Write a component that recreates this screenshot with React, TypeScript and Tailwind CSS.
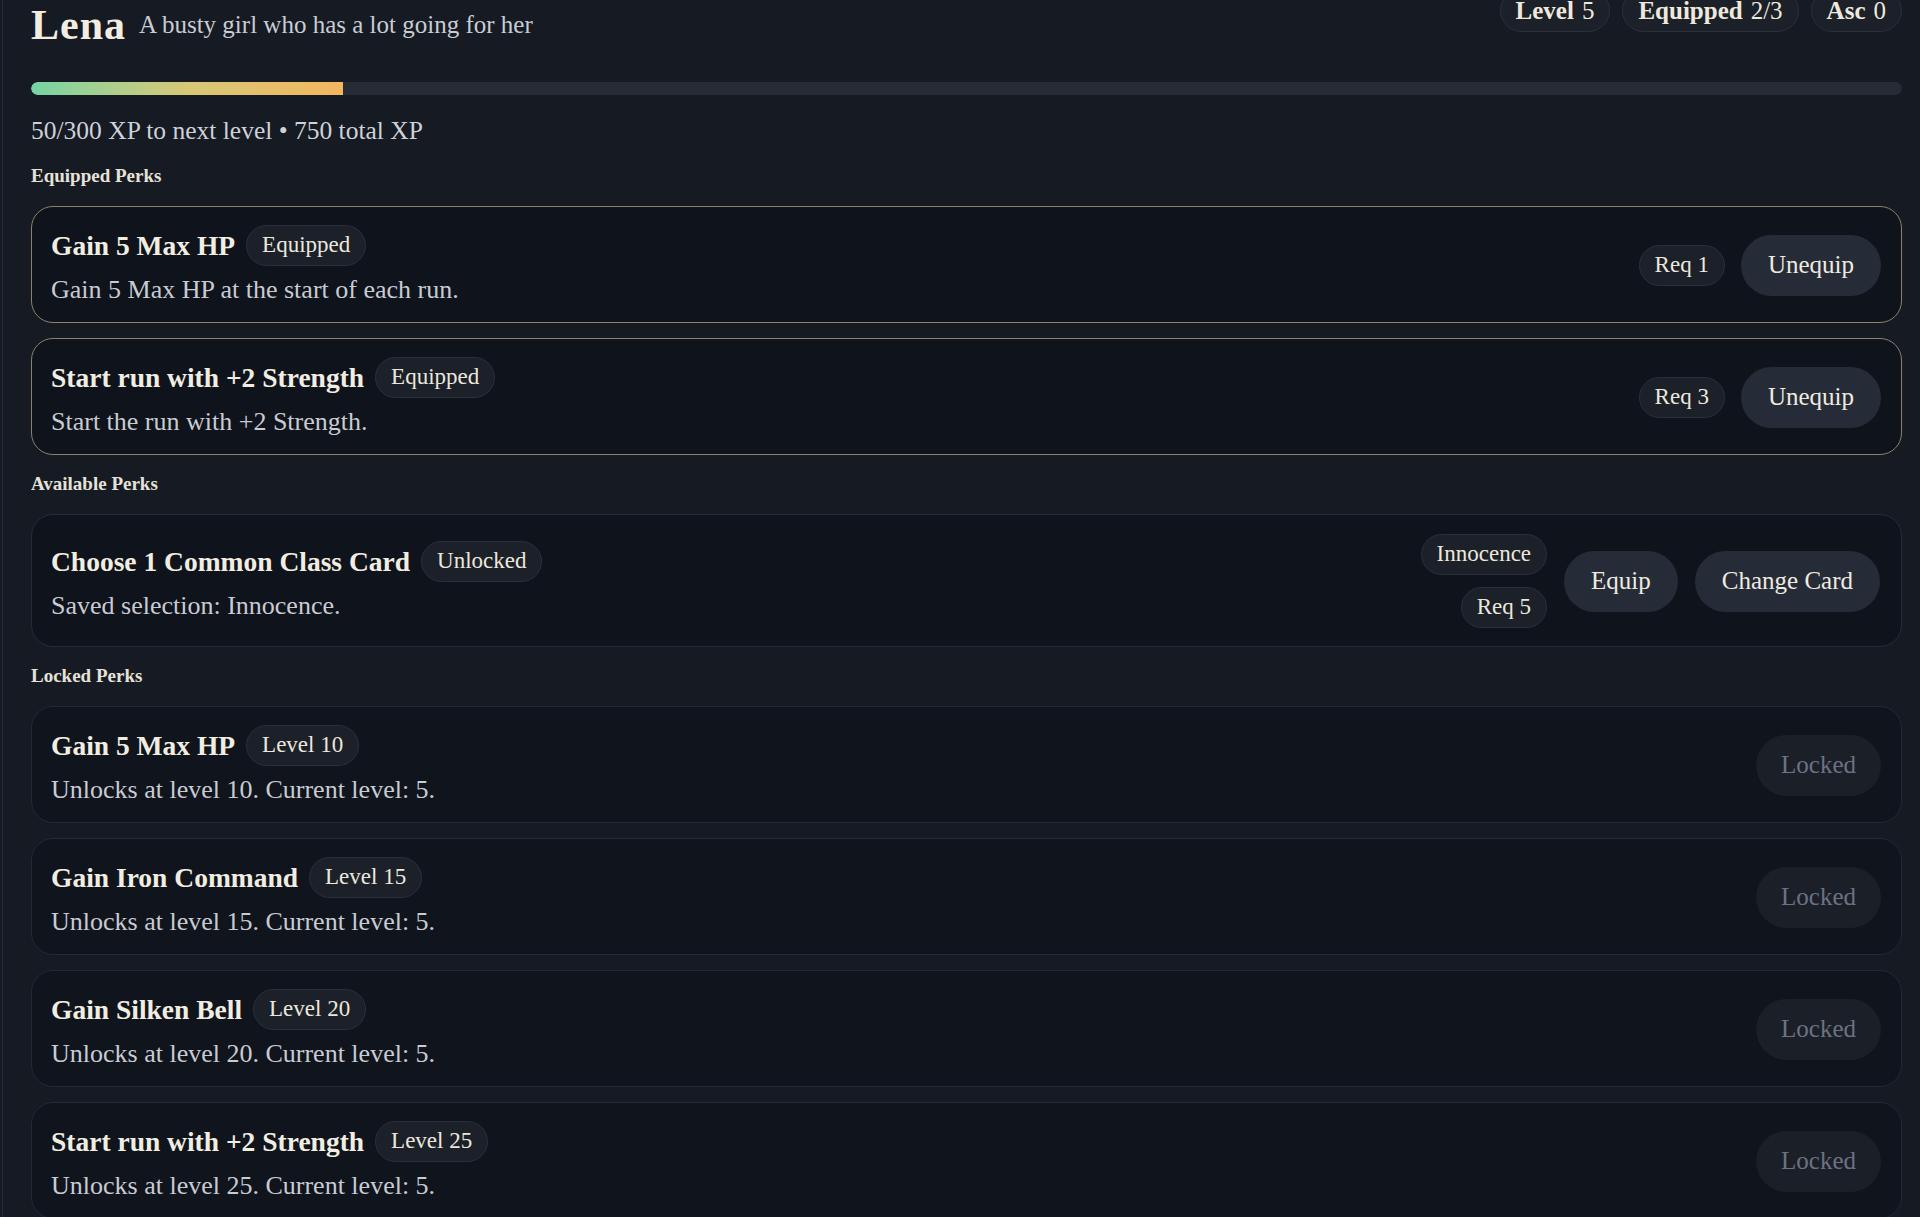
import React from 'react';

type Perk = {
  title: string;
  badge: string;
  desc: string;
  req?: string;
};

const equipped: Perk[] = [
  { title: 'Gain 5 Max HP', badge: 'Equipped', desc: 'Gain 5 Max HP at the start of each run.', req: 'Req 1' },
  { title: 'Start run with +2 Strength', badge: 'Equipped', desc: 'Start the run with +2 Strength.', req: 'Req 3' },
];

const locked: Perk[] = [
  { title: 'Gain 5 Max HP', badge: 'Level 10', desc: 'Unlocks at level 10. Current level: 5.' },
  { title: 'Gain Iron Command', badge: 'Level 15', desc: 'Unlocks at level 15. Current level: 5.' },
  { title: 'Gain Silken Bell', badge: 'Level 20', desc: 'Unlocks at level 20. Current level: 5.' },
  { title: 'Start run with +2 Strength', badge: 'Level 25', desc: 'Unlocks at level 25. Current level: 5.' },
];

const Pill: React.FC<{ children: React.ReactNode }> = ({ children }) => (
  <span className="inline-flex h-[41px] items-center rounded-full border border-[#2a303b] bg-[#1b2029] px-[15px] text-[23px] text-[#ece7dc]">
    {children}
  </span>
);

const Button: React.FC<{ children: React.ReactNode; disabled?: boolean }> = ({ children, disabled }) => (
  <button
    className={
      disabled
        ? 'h-[61px] rounded-full bg-[#1a1f28] px-[25px] text-[25px] text-[#6c7283]'
        : 'h-[61px] rounded-full bg-[#262c37] px-[27px] text-[25px] text-[#efeae0]'
    }
  >
    {children}
  </button>
);

const PerkText: React.FC<{ perk: Perk }> = ({ perk }) => (
  <div className="flex flex-col gap-[9px]">
    <div className="flex items-center gap-[11px]">
      <span className="text-[27.5px] font-bold leading-[34px] text-[#f2ede1]">{perk.title}</span>
      <Pill>{perk.badge}</Pill>
    </div>
    <div className="text-[26px] leading-[30px] text-[#c9cbd3]">{perk.desc}</div>
  </div>
);

const SectionLabel: React.FC<{ children: React.ReactNode }> = ({ children }) => (
  <div className="mb-[17px] mt-[16px] text-[19px] font-bold leading-[26px] text-[#e6e2d8]">{children}</div>
);

export default function App() {
  const xp = 50;
  const next = 300;

  return (
    <div className="min-h-screen overflow-hidden bg-[#151a23] font-['Liberation_Serif',Georgia,serif]">
      <div className="ml-[2px] min-h-screen border-l border-[#252a34] pl-[28px] pr-[18px]">
        {/* Header */}
        <div className="flex items-start justify-between pt-[1px]">
          <div className="flex items-center gap-[13px]">
            <span className="text-[42px] font-bold leading-[48px] tracking-[1px] text-[#f3ede0]">Lena</span>
            <span className="text-[25px] text-[#c9ccd4]">A busty girl who has a lot going for her</span>
          </div>
          <div className="-mt-[12px] flex gap-[12px]">
            {[
              ['Level', '5'],
              ['Equipped', '2/3'],
              ['Asc', '0'],
            ].map(([k, v]) => (
              <span
                key={k}
                className="inline-flex h-[43px] items-center gap-[8px] rounded-full border border-[#2b313c] bg-[#1b2029] px-[15px] text-[25px] text-[#efe9dd]"
              >
                <b>{k}</b>
                <span>{v}</span>
              </span>
            ))}
          </div>
        </div>

        {/* XP bar */}
        <div className="mt-[33px] h-[13px] w-full overflow-hidden rounded-full bg-[#262b35]">
          <div
            className="h-full rounded-l-full bg-linear-to-r from-[#72d4a3] via-[#d6c877] to-[#f3b65f]"
            style={{ width: `${(xp / next) * 100}%` }}
          />
        </div>
        <div className="mt-[20px] text-[25.5px] leading-[32px] text-[#cfd1d8]">
          50/300 XP to next level • 750 total XP
        </div>

        <SectionLabel>Equipped Perks</SectionLabel>
        <div className="flex flex-col gap-[15px]">
          {equipped.map((p) => (
            <div
              key={p.title}
              className="flex items-center justify-between rounded-[22px] border border-[#8a836b] bg-[#0f131b] pb-[17px] pl-[19px] pr-[20px] pt-[18px]"
            >
              <PerkText perk={p} />
              <div className="flex items-center gap-[16px]">
                <Pill>{p.req}</Pill>
                <Button>Unequip</Button>
              </div>
            </div>
          ))}
        </div>

        <SectionLabel>Available Perks</SectionLabel>
        <div className="flex items-center justify-between rounded-[22px] border border-[#262c37] bg-[#0f131b] pb-[18px] pl-[19px] pr-[21px] pt-[19px]">
          <PerkText perk={{ title: 'Choose 1 Common Class Card', badge: 'Unlocked', desc: 'Saved selection: Innocence.' }} />
          <div className="flex items-center gap-[17px]">
            <div className="flex flex-col items-end gap-[12px]">
              <Pill>Innocence</Pill>
              <Pill>Req 5</Pill>
            </div>
            <Button>Equip</Button>
            <Button>Change Card</Button>
          </div>
        </div>

        <SectionLabel>Locked Perks</SectionLabel>
        <div className="flex flex-col gap-[15px] pb-[4px]">
          {locked.map((p) => (
            <div
              key={p.badge}
              className="flex items-center justify-between rounded-[22px] border border-[#232935] bg-[#10141c] pb-[17px] pl-[19px] pr-[20px] pt-[18px]"
            >
              <PerkText perk={p} />
              <Button disabled>Locked</Button>
            </div>
          ))}
        </div>
      </div>
    </div>
  );
}
